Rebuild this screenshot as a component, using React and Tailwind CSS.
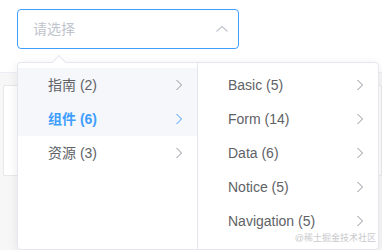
import React from "react";

const Chevron = ({ className = "" }) => (
  <svg width="8" height="12" viewBox="0 0 8 12" className={className} fill="none">
    <polyline points="1.5,1 6.5,6 1.5,11" stroke="currentColor" strokeWidth="1" />
  </svg>
);

const left = [
  { label: "指南 (2)", bg: true },
  { label: "组件 (6)", bg: true, active: true },
  { label: "资源 (3)" },
];
const right = ["Basic (5)", "Form (14)", "Data (6)", "Notice (5)", "Navigation (5)"];

export default function App() {
  return (
    <div
      className="relative w-[382px] h-[250px] overflow-hidden bg-white"
      style={{ fontFamily: '"Liberation Sans", "Noto Sans CJK SC", sans-serif' }}
    >
      {/* page content behind */}
      <div className="h-[72px] px-[17px] pt-[9px]">
        <div className="w-[222px] h-[40px] border border-[#409eff] rounded-[4px] flex items-center pl-[15px] pr-[9px] justify-between">
          <span className="text-[14px] text-[#c0c4cc]">请选择</span>
          <svg width="14" height="10" viewBox="0 0 14 10" fill="none" className="text-[#c0c4cc]">
            <polyline points="1.5,7.5 7,2.5 12.5,7.5" stroke="currentColor" strokeWidth="1.1" />
          </svg>
        </div>
      </div>
      <div className="border-t border-[#ebeef5] bg-[#f7f7f7] h-[178px] pt-[12px] pl-[3px]">
        <div className="h-[91px] bg-white border border-[#e8e8e8] rounded-[2px]" />
      </div>

      {/* dropdown */}
      <div className="absolute left-[17px] top-[62px] w-[362px] h-[188px] bg-white border border-[#e4e7ed] rounded-[4px] shadow-[0_2px_12px_rgba(0,0,0,0.08)] flex">
        <div className="absolute -top-[6px] left-[36px] w-[10px] h-[10px] bg-white border-l border-t border-[#e4e7ed] rotate-45" />
        <div className="w-[180px] border-r border-[#e4e7ed] py-[5px] relative">
          {left.map((it) => (
            <div
              key={it.label}
              className={`h-[34px] flex items-center justify-between pl-[30px] pr-[14px] text-[14px] ${
                it.bg ? "bg-[#f5f7fa]" : ""
              } ${it.active ? "text-[#409eff] font-bold" : "text-[#606266]"}`}
            >
              <span>{it.label}</span>
              <Chevron className={it.active ? "text-[#409eff]" : "text-[#909399]"} />
            </div>
          ))}
        </div>
        <div className="flex-1 py-[5px] relative">
          {right.map((t) => (
            <div
              key={t}
              className="h-[34px] flex items-center justify-between pl-[30px] pr-[14px] text-[14px] text-[#606266]"
            >
              <span>{t}</span>
              <Chevron className="text-[#909399]" />
            </div>
          ))}
          <div className="absolute right-[2px] bottom-[6px] text-[9px] leading-[10px] text-[#c8c9cc]">
            @稀土掘金技术社区
          </div>
        </div>
      </div>
    </div>
  );
}
